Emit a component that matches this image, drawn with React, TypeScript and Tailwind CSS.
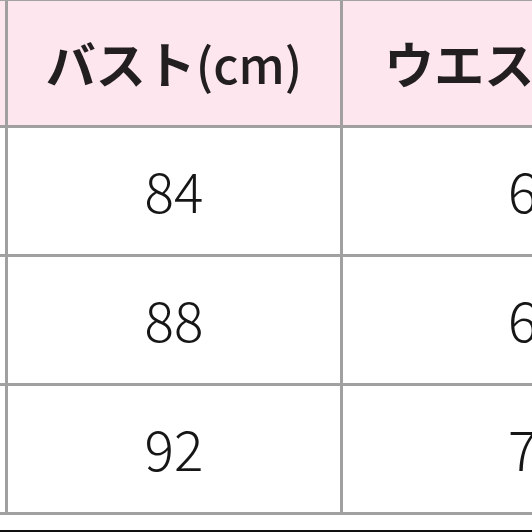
import React from "react";

const rows = [
  ["84", "64"],
  ["88", "68"],
  ["92", "72"],
];

export default function App() {
  return (
    <div
      className="w-[532px] h-[532px] overflow-hidden bg-white relative"
      style={{ fontFamily: '"Noto Sans CJK JP", "Noto Sans", sans-serif' }}
    >
      <div className="flex flex-col w-[900px] border-t border-[#a3a3a3]">
        <div className="flex h-[127px] bg-[#fde6ee] border-b-[3px] border-[#a0a0a0]">
          <div className="w-[8px] shrink-0 border-r-[3px] border-[#a0a0a0]" />
          <div className="w-[335px] shrink-0 border-r-[3px] border-[#a0a0a0] flex items-center justify-center text-[#231f20] pb-[2px]">
            <span className="text-[50px] font-bold leading-none">バスト</span>
            <span className="text-[49px] font-medium leading-none">(cm)</span>
          </div>
          <div className="w-[392px] shrink-0 border-r-[3px] border-[#a0a0a0] flex items-center justify-center text-[#231f20] pb-[2px]">
            <span className="text-[50px] font-bold leading-none">ウエスト</span>
            <span className="text-[49px] font-medium leading-none">(cm)</span>
          </div>
        </div>
        {rows.map((r, i) => (
          <div key={i} className="flex h-[129px] border-b-[3px] border-[#a0a0a0]">
            <div className="w-[8px] shrink-0 border-r-[3px] border-[#a0a0a0]" />
            <div className="w-[335px] shrink-0 border-r-[3px] border-[#a0a0a0] flex items-center justify-center text-[#161616] text-[55px] font-light leading-none pb-[4px]">
              {r[0]}
            </div>
            <div className="w-[392px] shrink-0 border-r-[3px] border-[#a0a0a0] flex items-center justify-center text-[#161616] text-[55px] font-light leading-none pb-[4px]">
              {r[1]}
            </div>
          </div>
        ))}
      </div>
      <div className="absolute left-0 bottom-0 w-full h-[2px] bg-[#111111]" />
    </div>
  );
}
